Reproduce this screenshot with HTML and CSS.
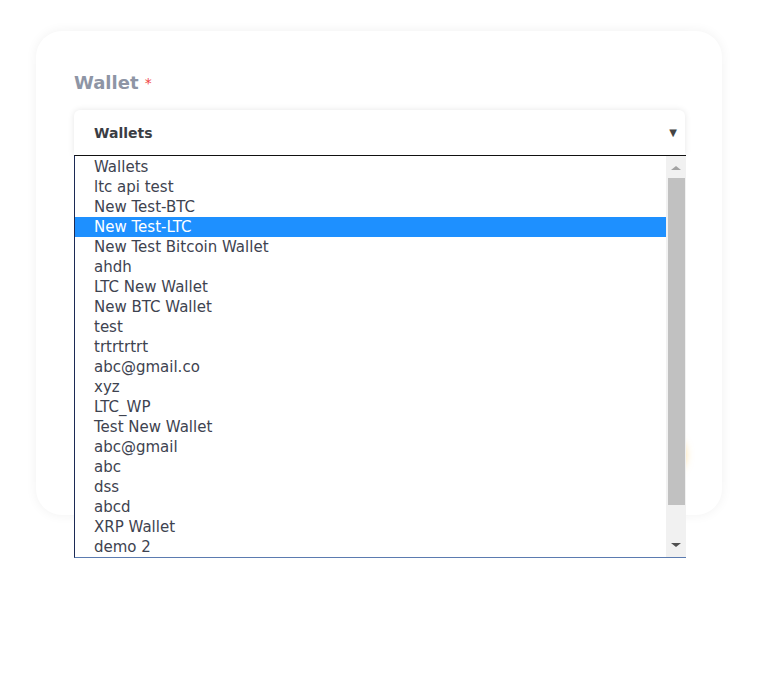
FILE: index.html
```html
<!DOCTYPE html>
<html lang="en">
<head>
    <meta charset="UTF-8">
    <meta name="viewport" content="width=device-width, initial-scale=1.0">
    <title>Wallet</title>
    <link rel="stylesheet" href="styles.css">
</head>
<body>

    <div class="card">
        <div class="field-label">Wallet <span class="required">*</span></div>

        <div class="select-wrap">
            <div class="select-box">
                <span class="select-value">Wallets</span>
                <span class="select-arrow">&#9660;</span>
            </div>

            <div class="dropdown">
                <ul class="options">
                    <li>Wallets</li>
                    <li>ltc api test</li>
                    <li>New Test-BTC</li>
                    <li class="selected">New Test-LTC</li>
                    <li>New Test Bitcoin Wallet</li>
                    <li>ahdh</li>
                    <li>LTC New Wallet</li>
                    <li>New BTC Wallet</li>
                    <li>test</li>
                    <li>trtrtrtrt</li>
                    <li>abc@gmail.co</li>
                    <li>xyz</li>
                    <li>LTC_WP</li>
                    <li>Test New Wallet</li>
                    <li>abc@gmail</li>
                    <li>abc</li>
                    <li>dss</li>
                    <li>abcd</li>
                    <li>XRP Wallet</li>
                    <li>demo 2</li>
                </ul>
                <div class="scrollbar">
                    <span class="scroll-up"></span>
                    <span class="scroll-thumb"></span>
                    <span class="scroll-down"></span>
                </div>
            </div>
        </div>

        <div class="actions">
            <button class="submit-button">Submit</button>
        </div>
    </div>

</body>
</html>
```

FILE: styles.css
```css
html {
    background-color: #ffffff;
}

body {
    margin: 0;
    min-height: 677px;
    padding: 31px 0 0 36px;
    box-sizing: border-box;
    font-family: "DejaVu Sans", sans-serif;
}

.card {
    width: 686px;
    height: 484px;
    box-sizing: border-box;
    padding: 40px 37px 0 38px;
    background-color: #ffffff;
    border-radius: 26px;
    box-shadow: 0 0 12px rgba(0, 0, 0, 0.06);
}

.field-label {
    font-size: 18px;
    font-weight: bold;
    color: #8e95a5;
    height: 24px;
    line-height: 24px;
}

.required {
    color: #f04444;
    font-size: 14px;
    font-weight: normal;
    vertical-align: top;
}

.select-wrap {
    position: relative;
    z-index: 5;
    margin-top: 15px;
}

.select-box {
    height: 45px;
    box-sizing: border-box;
    padding: 0 8px 0 20px;
    background-color: #ffffff;
    border-radius: 6px 6px 0 0;
    box-shadow: 0 0 6px rgba(0, 0, 0, 0.1);
    display: flex;
    align-items: center;
    justify-content: space-between;
}

.select-value {
    font-size: 14px;
    font-weight: bold;
    color: #3a3d44;
}

.select-arrow {
    font-size: 10px;
    color: #444444;
}

.dropdown {
    position: absolute;
    top: 45px;
    left: 0;
    width: 612px;
    height: 403px;
    box-sizing: border-box;
    background-color: #ffffff;
    border-top: 1px solid #111111;
    border-left: 1px solid #1c2a55;
    border-bottom: 1px solid #5b7bb0;
    display: flex;
}

.options {
    list-style: none;
    margin: 0;
    padding: 1px 0 0 0;
    flex-grow: 1;
}

.options li {
    height: 20px;
    line-height: 20px;
    padding-left: 19px;
    font-size: 15px;
    color: #3e4350;
}

.options li.selected {
    background-color: #1e90ff;
    color: #ffffff;
}

.scrollbar {
    width: 20px;
    background-color: #f1f1f1;
    display: flex;
    flex-direction: column;
    align-items: center;
}

.scroll-up,
.scroll-down {
    width: 0;
    height: 0;
    border-left: 5px solid transparent;
    border-right: 5px solid transparent;
}

.scroll-up {
    margin: 10px 0 8px;
    border-bottom: 4px solid #a3a3a3;
}

.scroll-thumb {
    width: 17px;
    height: 327px;
    background-color: #c1c1c1;
}

.scroll-down {
    margin-top: 38px;
    border-top: 4px solid #505050;
}

.actions {
    display: flex;
    justify-content: flex-end;
    margin-top: 280px;
}

.submit-button {
    width: 150px;
    height: 40px;
    border: none;
    border-radius: 20px;
    background-color: #ffc24a;
    box-shadow: 0 0 8px rgba(255, 190, 60, 0.6);
    color: #ffffff;
    font-family: inherit;
}
```
